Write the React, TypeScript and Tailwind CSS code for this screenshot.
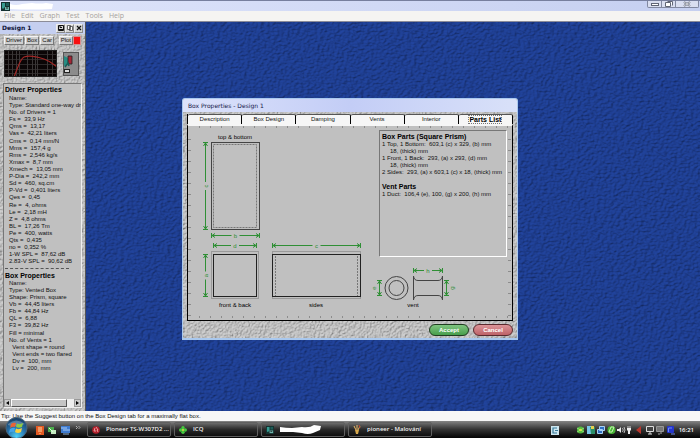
import type { ReactNode } from 'react';

const MENUS = ['File', 'Edit', 'Graph', 'Test', 'Tools', 'Help'];
const TABS = ['Description', 'Box Design', 'Damping', 'Vents', 'Interior', 'Parts List'];

const DRIVER_GROUPS = [
  ['Name:', 'Type: Standard one-way driv', 'No. of Drivers = 1', 'Fs =  33,9 Hz', 'Qms =  13,17', 'Vas =  42,21 liters'],
  ['Cms =  0,14 mm/N', 'Mms =  157,4 g', 'Rms =  2,546 kg/s', 'Xmax =  8,7 mm', 'Xmech =  13,05 mm', 'P-Dia =  242,2 mm', 'Sd =  460, sq.cm', 'P-Vd =  0,401 liters', 'Qes =  0,45'],
  ['Re =  4, ohms', 'Le =  2,18 mH', 'Z =  4,8 ohms', 'BL =  17,26 Tm', 'Pe =  400, watts', 'Qts =  0,435', 'no =  0,352 %', '1-W SPL =  87,62 dB', '2.83-V SPL =  90,62 dB'],
];

const BOX_GROUPS = [
  ['Name:', 'Type: Vented Box', 'Shape: Prism, square', 'Vb =  44,45 liters', 'Fb =  44,84 Hz', 'QL =  6,88', 'F3 =  39,82 Hz'],
  ['Fill = minimal', 'No. of Vents = 1', '  Vent shape = round', '  Vent ends = two flared', '  Dv =  100, mm', '  Lv =  200, mm'],
];

const TOP_TICKS = Array.from({ length: 29 }, (_, i) => 199 + i * 11);
const SIDE_TICKS = Array.from({ length: 17 }, (_, i) => 139 + i * 11);

interface GrainProps {
  id: string;
  frequency: string;
  light: string;
  base: string;
  depth: number;
}

function Grain({ id, frequency, light, base, depth }: GrainProps) {
  return (
    <svg className="absolute inset-0 h-full w-full" aria-hidden="true">
      <filter id={id} x="0" y="0" width="100%" height="100%" colorInterpolationFilters="sRGB">
        <feTurbulence type="fractalNoise" baseFrequency={frequency} numOctaves={2} seed={4} result="noise" />
        <feDiffuseLighting in="noise" surfaceScale={depth} lightingColor={light}>
          <feDistantLight azimuth={225} elevation={60} />
        </feDiffuseLighting>
      </filter>
      <rect width="100%" height="100%" fill={base} />
      <rect width="100%" height="100%" filter={`url(#${id})`} opacity={0.6} />
    </svg>
  );
}

function Lines({ groups }: { groups: string[][] }) {
  return (
    <div className="flex flex-col gap-px pl-1">
      {groups.map((group) => (
        <div key={group[0] + group[1]}>
          {group.map((line) => (
            <p key={line} className="whitespace-pre">
              {line}
            </p>
          ))}
        </div>
      ))}
    </div>
  );
}

function SmallButton({ label, children }: { label: string; children: ReactNode }) {
  return (
    <button aria-label={label} className="grid h-[9px] w-[9px] place-items-center border border-t-[#eee] border-l-[#eee] border-r-[#8a8a8a] border-b-[#8a8a8a] bg-[#d6d6d6]">
      {children}
    </button>
  );
}

function ToolButton({ children }: { children: ReactNode }) {
  return (
    <button className="flex h-[9px] items-center border border-t-[#f4f4f4] border-l-[#f4f4f4] border-r-[#777] border-b-[#777] bg-[#cfcfcf] px-px text-[6px] leading-[7px] text-[#111]">
      {children}
    </button>
  );
}

function ResponseGraph() {
  return (
    <svg width="53" height="27" viewBox="0 0 53 27" aria-label="Response graph">
      <rect width="53" height="27" fill="#0b0606" />
      <path d="M0 4.5H53M0 9.5H53M0 14.5H53M0 19.5H53M0 23.5H53" stroke="#2e2a2a" />
      <path d="M4.5 0V27M8.5 0V27M12.5 0V27M15.5 0V27M23.5 0V27M28.5 0V27M31.5 0V27M33.5 0V27M43.5 0V27M48.5 0V27" stroke="#3a3636" />
      <path d="M10 27C14 17 16 9 20 7C25 5 34 7 40 9C46 11 49 14 53 17" fill="none" stroke="#a02826" strokeWidth="1.2" />
      <rect x="0.5" y="0.5" width="52" height="26" fill="none" stroke="#222" />
    </svg>
  );
}

function Sidebar() {
  return (
    <aside className="relative flex w-[86px] shrink-0 flex-col border-r border-[#555]">
      <Grain id="side-grain" frequency="0.6" light="#dadada" base="#c4c4c4" depth={1.8} />
      <header className="relative flex h-3 items-center bg-[#c5cff0] pr-0.5 pl-0.5">
        <h2 className="flex-1 text-[6px] leading-3 font-bold text-[#0d1238]" style={{ fontFamily: '"DejaVu Sans", sans-serif' }}>
          Design 1
        </h2>
        <div className="flex">
          <SmallButton label="Save">
            <svg width="6" height="6" viewBox="0 0 6 6"><path d="M0.5 0.5H5.5V5.5H0.5ZM1 4.5H5M2 0.5V2.5H4" fill="none" stroke="#111" /></svg>
          </SmallButton>
          <SmallButton label="Copy">
            <svg width="6" height="6" viewBox="0 0 6 6"><path d="M0.5 0.5H3.5V4.5H0.5ZM2.5 1.5H5.5V5.5H2.5Z" fill="#fff" stroke="#333" strokeWidth=".7" /></svg>
          </SmallButton>
          <SmallButton label="Close">
            <svg width="6" height="6" viewBox="0 0 6 6"><path d="M1 1L5 5M5 1L1 5" stroke="#111" strokeWidth="1.2" /></svg>
          </SmallButton>
        </div>
      </header>
      <div className="relative flex items-center justify-between px-1 pt-0.5">
        <div className="flex gap-px">
          <ToolButton>Driver</ToolButton>
          <ToolButton>Box</ToolButton>
          <ToolButton>Car</ToolButton>
        </div>
        <div className="flex">
          <ToolButton>Plot</ToolButton>
          <button aria-label="Plot color" className="h-[9px] w-2 border border-[#d89090] bg-[#f81010]" />
        </div>
      </div>
      <div className="relative flex items-center gap-[6px] pt-[5px] pl-1">
        <ResponseGraph />
        <svg width="16" height="24" viewBox="0 0 16 24" aria-label="Box and driver">
          <rect x="0.5" y="0.5" width="15" height="23" fill="#8c8c8c" stroke="#555" />
          <path d="M1 4L5 6V13L1 14Z" fill="#278c83" />
          <path d="M5 4H9V12H5Z" fill="#a52735" stroke="#222" strokeWidth=".8" />
          <path d="M2 15L5 11L6 14" fill="none" stroke="#195c57" strokeWidth="1.5" />
          <rect x="1.5" y="17.5" width="5" height="3" fill="#ddd" stroke="#222" />
        </svg>
      </div>
      <section className="relative mx-[3px] mt-1.5 mb-[3px] flex min-h-0 flex-1 flex-col overflow-hidden border border-t-[#777] border-l-[#777] border-r-[#eee] border-b-[#eee] bg-[#c0c0c0]">
        <div className="flex-1 overflow-hidden pt-0.5 pl-px text-[6px] leading-[7px] text-[#111]">
          <h3 className="pb-px text-[7px] leading-[8px] font-bold text-black">Driver Properties</h3>
          <Lines groups={DRIVER_GROUPS} />
          <p className="mr-3 mt-px mb-[3px] h-[3px] border-b border-dashed border-[#555]" />
          <h3 className="text-[7px] leading-[8px] font-bold text-black">Box Properties</h3>
          <Lines groups={BOX_GROUPS} />
        </div>
        <div className="flex h-2 shrink-0 bg-[#eee]">
          <button aria-label="Scroll left" className="grid w-[7px] place-items-center border border-[#999] bg-[#ccc]">
            <svg width="3" height="4" viewBox="0 0 3 4"><path d="M3 0V4L0 2Z" /></svg>
          </button>
          <div className="w-14 border border-t-white border-l-white border-r-[#555] border-b-[#555] bg-[#c4c4c4]" />
          <div className="flex-1" />
          <button aria-label="Scroll right" className="grid w-[7px] place-items-center border border-[#999] bg-[#ccc]">
            <svg width="3" height="4" viewBox="0 0 3 4"><path d="M0 0V4L3 2Z" /></svg>
          </button>
        </div>
      </section>
    </aside>
  );
}

function HArrow({ x1, x2, y, label }: { x1: number; x2: number; y: number; label: string }) {
  const mid = (x1 + x2) / 2;
  return (
    <g stroke="#2f8f35" fill="none">
      <path d={`M${x1} ${y}H${mid - 4}M${mid + 4} ${y}H${x2}M${x1 + 0.5} ${y - 2.5}V${y + 2.5}M${x2 - 0.5} ${y - 2.5}V${y + 2.5}`} />
      <path d={`M${x1 + 4} ${y - 2}L${x1 + 1} ${y}L${x1 + 4} ${y + 2}M${x2 - 4} ${y - 2}L${x2 - 1} ${y}L${x2 - 4} ${y + 2}`} />
      <text x={mid} y={y + 2} fontSize="6" textAnchor="middle" fill="#2f8f35" stroke="none">{label}</text>
    </g>
  );
}

function VArrow({ y1, y2, x, label, labelX = x }: { y1: number; y2: number; x: number; label: string; labelX?: number }) {
  const mid = (y1 + y2) / 2;
  const gap = labelX === x ? 4 : 0;
  return (
    <g stroke="#2f8f35" fill="none">
      <path d={`M${x} ${y1}V${mid - gap}M${x} ${mid + gap}V${y2}M${x - 2.5} ${y1 + 0.5}H${x + 2.5}M${x - 2.5} ${y2 - 0.5}H${x + 2.5}`} />
      <path d={`M${x - 2} ${y1 + 4}L${x} ${y1 + 1}L${x + 2} ${y1 + 4}M${x - 2} ${y2 - 4}L${x} ${y2 - 1}L${x + 2} ${y2 - 4}`} />
      <text transform={`translate(${labelX + 2} ${mid}) rotate(-90)`} fontSize="6" textAnchor="middle" fill="#2f8f35" stroke="none">{label}</text>
    </g>
  );
}

function PartsDrawing() {
  return (
    <svg className="absolute top-0 left-0" width="325" height="194" viewBox="188 126 325 194">
      <g stroke="#8c8c8c">
        {TOP_TICKS.map((x) => <path key={x} d={`M${x + 0.5} 126V128M${x + 0.5} 316V318`} />)}
        {SIDE_TICKS.map((y) => <path key={y} d={`M188 ${y + 0.5}H191M508 ${y + 0.5}H511`} />)}
      </g>
      <g fill="none" stroke="#444">
        <rect x="211.5" y="142.5" width="48" height="87" />
        <rect x="213.5" y="144.5" width="43" height="83" stroke="#777" strokeDasharray="2 1" />
        <rect x="211.5" y="251.5" width="47" height="47" stroke="#999" />
        <rect x="213.5" y="254.5" width="43" height="42" stroke="#222" />
        <rect x="272.5" y="251.5" width="88" height="47" stroke="#999" />
        <rect x="272.5" y="254.5" width="88" height="42" stroke="#222" />
        <path d="M275.5 256V296M357.5 256V296" stroke="#777" strokeDasharray="2 1" />
        <circle cx="396.5" cy="288" r="11.5" />
        <circle cx="396.5" cy="288" r="7.5" />
        <path d="M413.5 276V300M442.5 276V300M413.5 276Q414 280.500 418 280.500H438Q442 280.500 442.500 276M413.500 300Q414 295.500 418 295.500H438Q442 295.500 442.500 300" />
      </g>
      <VArrow x={205.5} y1={142} y2={230} label="c" />
      <HArrow x1={211} x2={260} y={235.5} label="b" />
      <HArrow x1={213} x2={257} y={245.5} label="d" />
      <VArrow x={205.5} y1={254} y2={297} label="a" />
      <HArrow x1={272} x2={361} y={245.5} label="c" />
      <VArrow x={379.5} y1={280} y2={296} label="e" labelX={374} />
      <HArrow x1={413} x2={443} y={270.5} label="h" />
      <VArrow x={446.5} y1={280} y2={296} label="g" labelX={452} />
      <g fontSize="6" textAnchor="middle" fill="#000">
        <text x="235" y="139">top &amp; bottom</text>
        <text x="235" y="307">front &amp; back</text>
        <text x="316" y="307">sides</text>
        <text x="413" y="307">vent</text>
      </g>
    </svg>
  );
}

function BoxDialog() {
  return (
    <section role="dialog" aria-label="Box Properties" className="relative flex h-[242px] w-[336px] flex-col overflow-hidden rounded-t-[3px] border border-[#a9c8ee] border-b-2 bg-[#bbb]">
      <Grain id="dialog-grain" frequency="0.6" light="#dadada" base="#c4c4c4" depth={1.8} />
      <header className="relative h-[13px] bg-linear-to-r from-[#dde3fb] via-[#c3cdf6] to-[#d9e1f9] pl-[5px] text-[6px] leading-[13px] text-[#15174a]" style={{ fontFamily: '"DejaVu Sans", sans-serif' }}>
        Box Properties - Design 1
      </header>
      <div className="relative flex flex-1 flex-col pt-0.5 pr-1 pl-1">
        <div role="tablist" className="grid grid-cols-6 border-l border-black">
          {TABS.map((tab) => {
            const active = tab === 'Parts List';
            return (
              <button
                key={tab}
                role="tab"
                aria-selected={active}
                className={`h-[10px] rounded-t-[2px] border-t border-r border-t-[#555] border-r-black bg-[#f6f6f6] text-center leading-[9px] ${active ? 'text-[7px] font-bold text-black' : 'text-[6px] text-[#111]'}`}
              >
                <span className={active ? 'outline-1 outline-dotted outline-[#777]' : ''}>{tab}</span>
              </button>
            );
          })}
        </div>
        <div className="relative flex h-[197px] justify-end border border-black border-t-2 border-t-[#f6f6f6] bg-[#c0c0c0]">
          <PartsDrawing />
          <div className="relative mt-1 mr-[5px] h-[127px] w-[128px] border border-t-[#777] border-l-[#777] border-r-white border-b-white bg-[#c0c0c0] pt-0.5 pl-0.5 text-[6px] leading-[7px] text-[#111]">
            <h3 className="text-[7px] leading-[8px] font-bold text-black">Box Parts (Square Prism)</h3>
            <p className="whitespace-pre">1 Top, 1 Bottom:  603,1 (c) x 329, (b) mm</p>
            <p className="pl-2">18, (thick) mm</p>
            <p className="whitespace-pre">1 Front, 1 Back:  293, (a) x 293, (d) mm</p>
            <p className="pl-2">18, (thick) mm</p>
            <p className="whitespace-pre">2 Sides:  293, (a) x 603,1 (c) x 18, (thick) mm</p>
            <h3 className="mt-[7px] text-[7px] leading-[8px] font-bold text-black">Vent Parts</h3>
            <p className="whitespace-pre">1 Duct:  106,4 (e), 100, (g) x 200, (h) mm</p>
          </div>
        </div>
        <div className="flex justify-end gap-1 pt-[3px]">
          <button className="h-3 w-10 rounded-full border border-[#1f3d20] bg-linear-to-b from-[#7fc580] to-[#479e4c] text-center text-[6px] leading-[10px] font-bold text-white">Accept</button>
          <button className="h-3 w-10 rounded-full border border-[#5a2a2e] bg-linear-to-b from-[#dc9599] to-[#bd6268] text-center text-[6px] leading-[10px] font-bold text-white">Cancel</button>
        </div>
      </div>
    </section>
  );
}

function AppIcon({ size }: { size: number }) {
  return (
    <svg width={size} height={size} viewBox="0 0 9 9" className="shrink-0">
      <rect width="9" height="9" fill="#14312f" />
      <path d="M1 1H4V5L2 7L1 6Z" fill="#379b91" />
      <path d="M5 1H8V4H5Z" fill="#1d5c58" />
      <path d="M4 5H8V8H4Z" fill="#70b5ad" />
      <path d="M5 6H7" stroke="#222" />
    </svg>
  );
}

function TaskButton({ icon, children }: { icon: ReactNode; children: ReactNode }) {
  return (
    <button className="flex h-[15px] w-[84px] shrink-0 items-center gap-1.5 rounded-[2px] border border-[#606060] bg-linear-to-b from-[#6b6b6b] via-[#292929] to-[#101010] pl-1 text-[6px] leading-[13px] font-semibold whitespace-pre text-[#f2f2f2]" style={{ fontFamily: '"Open Sans", sans-serif' }}>
      {icon}
      {children}
    </button>
  );
}

function Tray() {
  return (
    <svg width="126" height="12" viewBox="550 423 126 12" aria-label="Notification area">
      <rect x="551" y="425" width="8" height="9" fill="#cde6ef" />
      <path d="M557 427H553V432H557M555 429.500H558" fill="none" stroke="#397b9a" strokeWidth="1.2" />
      <circle cx="580.500" cy="429" r="3.500" fill="#52b83e" />
      <path d="M577 427L584 431M584 427L577 431" stroke="#92e377" />
      <circle cx="580.500" cy="429" r="1.300" fill="#d9e34c" />
      <rect x="587" y="425" width="4" height="8" fill="#79c7e8" />
      <path d="M590 426H595V433H591Z" fill="#2c8f68" />
      <rect x="591" y="425" width="3" height="3" fill="#e7d04e" />
      <path d="M599.500 425.500H604.500V429.500H599.500ZM597.500 428.500H602.500V432.500H597.500Z" fill="#2f6fc2" stroke="#a9d2f5" />
      <circle cx="611.500" cy="429" r="4" fill="#49b735" />
      <path d="M609 431L611 426H614L612 431Z" fill="none" stroke="#c6f2b4" />
      <path d="M617 428H619L621 426V432L619 430H617Z" fill="#eee" />
      <path d="M622.500 427Q624 429 622.500 431M624 426Q626 429 624 432" fill="none" stroke="#ddd" strokeWidth=".8" />
      <path d="M627 427H631V429L630 430V433H628V430L627 429Z" fill="#eee" />
      <path d="M628 425V427M630 425V427" stroke="#eee" strokeWidth=".8" />
      <path d="M641 425V433L636 429Z" fill="#b8372d" />
      <path d="M646.500 425.500H653.500V430.500H646.500Z" fill="#444" stroke="#ddd" />
      <path d="M648 433H652M650 431V433" stroke="#ddd" />
      <path d="M656.500 425.500H663.500V430.500H656.500Z" fill="#777" stroke="#999" />
      <path d="M658 433H660M661 431V433" stroke="#aaa" />
      <rect x="667" y="425" width="7" height="7" rx="1" fill="#2536cd" />
      <path d="M668.500 431V427H672M671 433H675" fill="none" stroke="#6f8cf4" />
    </svg>
  );
}

function Taskbar() {
  return (
    <footer className="relative flex h-[17px] shrink-0 items-center bg-linear-to-b from-[#858585] via-[#333] to-[#050505] pr-[6px] pl-[5px]">
      <button aria-label="Start" className="-mt-1 h-[22px] w-[23px]">
        <svg width="23" height="22" viewBox="0 0 23 22">
          <defs>
            <radialGradient id="orb" cx=".5" cy=".9" r=".9">
              <stop offset="0" stopColor="#4fd0f4" />
              <stop offset=".5" stopColor="#2672ac" />
              <stop offset="1" stopColor="#17395e" />
            </radialGradient>
          </defs>
          <circle cx="11.5" cy="11" r="10.500" fill="url(#orb)" stroke="#48667d" />
          <path d="M3 7Q11 0 20 7Q11 11 3 8Z" fill="#fff" opacity=".25" />
          <path d="M6 7Q8 5 11 6L10 10Q8 9 5 11Z" fill="#ea6335" />
          <path d="M12 6.500Q15 8 18 6L17 10Q14 11.500 11 10Z" fill="#8fca41" />
          <path d="M5 12Q8 10 10 11L9 15Q7 14 4 16Z" fill="#45a4ea" />
          <path d="M11 11.500Q14 13 17 11L16 15Q13 17 10 15Z" fill="#fad13f" />
        </svg>
      </button>
      <svg width="59" height="12" viewBox="28 423 59 12" aria-label="Quick launch">
        <rect x="36" y="425" width="8" height="9" fill="#e45a23" />
        <path d="M39 426V431M41 426V431M40 432V433" stroke="#ffd9a6" />
        <rect x="48" y="426" width="6" height="5" fill="#4cae4c" />
        <path d="M51 429H56V433H51Z" fill="#c5ebc0" />
        <path d="M49 427L53 431" stroke="#e0ffe0" />
        <rect x="61" y="425" width="9" height="7" fill="#3e7bd0" />
        <path d="M61 427H67M63 429H70" stroke="#a8cdf7" />
        <path d="M63 433H69" stroke="#8fb5df" />
        <path d="M76 425L77.500 426.500L76 428M78.500 425L80 426.500L78.500 428" fill="none" stroke="#ddd" strokeWidth=".7" />
      </svg>
      <nav aria-label="Open windows" className="flex flex-1 gap-[3px]">
        <TaskButton icon={<svg width="8" height="8" viewBox="0 0 8 8" className="shrink-0"><circle cx="4" cy="4" r="3.800" fill="#b3202c" /><path d="M4 1L6 4H5L6 6M3 2L2 5H4" fill="none" stroke="#f7b7b7" strokeWidth=".8" /></svg>}>
          Pioneer TS-W307D2 ...
        </TaskButton>
        <TaskButton icon={<svg width="8" height="8" viewBox="0 0 8 8" fill="#45ca3f"><circle cx="4" cy="1.700" r="1.700" /><circle cx="4" cy="6.300" r="1.700" /><circle cx="1.700" cy="4" r="1.700" /><circle cx="6.300" cy="4" r="1.700" /><circle cx="4" cy="4" r="1" fill="#eee34c" /></svg>}>
          ICQ
        </TaskButton>
        <TaskButton icon={<AppIcon size={8} />}>
          <svg width="42" height="10" viewBox="0 0 42 10"><path d="M0 2Q6 3 12 3L22 2Q30 3 34 0L41 1L40 5L33 8Q28 10 22 8L13 7Q7 7 0 7Z" fill="#fff" /></svg>
        </TaskButton>
        <TaskButton icon={<svg width="8" height="9" viewBox="0 0 8 9"><path d="M2 5H6L5 9H3Z" fill="#d8a94d" /><path d="M3 5L1 1M4 5V0M5 5L7 1" stroke="#edbc69" /><path d="M6 0L7 3" stroke="#bf4b33" /></svg>}>
          pioneer - Malování
        </TaskButton>
      </nav>
      <Tray />
      <time className="pl-[3px] text-[6px] leading-[14px] font-semibold text-white" style={{ fontFamily: '"Open Sans", sans-serif' }}>16:21</time>
    </footer>
  );
}

export default function App() {
  return (
    <div className="relative flex h-screen flex-col overflow-hidden bg-[#1e3d94]" style={{ fontFamily: '"Liberation Sans", Arial, sans-serif' }}>
      <header className="flex h-[11px] shrink-0 justify-between border-t border-[#777f9e] bg-linear-to-r from-[#dfe5fb] to-[#c5cff0]">
        <div className="flex items-center pl-px">
          <AppIcon size={9} />
          <svg width="44" height="8" viewBox="0 0 44 8"><path d="M0 2Q6 4 12 2L22 1Q30 2 36 1L43 2L42 7Q22 8 0 7Z" fill="#fff" /></svg>
        </div>
        <div className="mr-px flex h-[7px] rounded-b-[2px] border border-t-0 border-[#8188a0] bg-[#d9def0]">
          <button aria-label="Minimize" className="grid w-[14px] place-items-center border-r border-[#8188a0]">
            <svg width="8" height="5" viewBox="0 0 8 5"><rect x="0.5" y="1.500" width="7" height="2" fill="#fff" stroke="#606575" /></svg>
          </button>
          <button aria-label="Restore" className="grid w-[14px] place-items-center border-r border-[#8188a0]">
            <svg width="8" height="6" viewBox="0 0 8 6"><path d="M2.500 .5H7.500V4.500M.5 1.500H5.500V5.500H.5Z" fill="#fff" stroke="#606575" /></svg>
          </button>
          <button aria-label="Close" className="grid w-[22px] place-items-center">
            <svg width="8" height="6" viewBox="0 0 8 6"><path d="M1 1L7 5M7 1L1 5" stroke="#606575" strokeWidth="2" /><path d="M1 1L7 5M7 1L1 5" stroke="#fff" strokeWidth=".7" /></svg>
          </button>
        </div>
      </header>
      <nav aria-label="Main menu" className="flex h-[11px] shrink-0 items-center gap-1.5 border-b border-[#8c8c98] bg-[#f5f4f2] pl-1 text-[7px] leading-[10px] text-[#a5a29e]" style={{ fontFamily: '"Open Sans", sans-serif' }}>
        {MENUS.map((menu) => (
          <button key={menu}>{menu}</button>
        ))}
      </nav>
      <main className="flex min-h-0 flex-1">
        <Sidebar />
        <div className="relative flex-1">
          <Grain id="desk-grain" frequency="0.3 0.5" light="#2449a4" base="#1f3f99" depth={1.6} />
        </div>
      </main>
      <p className="h-[10px] shrink-0 bg-[#f7f7f7] pl-px text-[6px] leading-[10px] text-[#111]">
        Tip: Use the Suggest button on the Box Design tab for a maximally flat box.
      </p>
      <Taskbar />
      <div className="pointer-events-none absolute inset-0 flex items-center justify-center">
        <div className="pointer-events-auto">
          <BoxDialog />
        </div>
      </div>
    </div>
  );
}
